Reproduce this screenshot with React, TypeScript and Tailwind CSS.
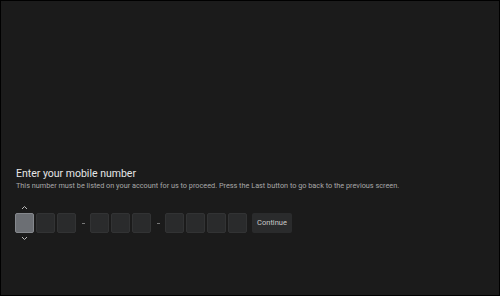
import React from "react";

function DigitBox({ active }: { active?: boolean }) {
    return (
        <div
            className={
                active
                    ? "w-[19px] h-[20px] rounded-[2px] bg-[#6c6f74] border border-[#85888d]"
                    : "w-[19px] h-[20px] rounded-[2px] bg-[#2a2b2c] border border-[#323334]"
            }
        />
    );
}

function Dash() {
    return <div className="w-[3px] h-[1px] bg-[#777] mx-[3.5px]" />;
}

export default function App() {
    return (
        <div className="w-[500px] h-[296px] bg-[#1b1b1b] border border-black flex flex-col justify-end pb-[54px] pl-[14px] font-['Roboto',sans-serif]">
            <h1 className="text-[10.5px] leading-[14px] text-[#e6e6e6] pl-[1px]">Enter your mobile number</h1>
            <p className="text-[7.3px] leading-[10px] text-[#a8a8a8] pl-[1px]">
                This number must be listed on your account for us to proceed. Press the Last button to go back to the previous screen.
            </p>

            <div className="mt-[14px] flex items-center gap-[2px]">
                <div className="flex flex-col items-center">
                    <svg width="7" height="5" viewBox="0 0 7 5" className="mb-[3px]">
                        <path d="M1 4 L3.5 1.5 L6 4" stroke="#bbb" strokeWidth="1" fill="none" />
                    </svg>
                    <DigitBox active />
                    <svg width="7" height="5" viewBox="0 0 7 5" className="mt-[3px]">
                        <path d="M1 1 L3.5 3.5 L6 1" stroke="#bbb" strokeWidth="1" fill="none" />
                    </svg>
                </div>
                <DigitBox />
                <DigitBox />
                <Dash />
                <DigitBox />
                <DigitBox />
                <DigitBox />
                <Dash />
                <DigitBox />
                <DigitBox />
                <DigitBox />
                <DigitBox />
                <button className="ml-[3px] h-[20px] w-[40px] rounded-[2px] bg-[#2a2b2c] text-[7.5px] text-[#c8c8c8]">
                    Continue
                </button>
            </div>
        </div>
    );
}
